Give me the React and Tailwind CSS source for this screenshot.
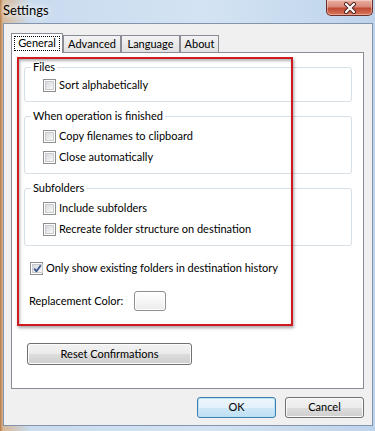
import React from "react";

const Check = ({ checked }) => (
  <span className="flex w-[13px] h-[13px] shrink-0 border border-[#8e8f8f] bg-white p-[1px]">
    <span className="flex flex-1 items-center justify-center border border-[#c9cbcf] bg-linear-to-br from-[#d9dbdf] to-[#f7f7f7]">
      {checked && (
        <svg width="9" height="9" viewBox="0 0 9 9">
          <path
            d="M1.2 4.6 L3.5 7.3 L7.8 1.2"
            fill="none"
            stroke="#3f5a8f"
            strokeWidth="1.9"
            strokeLinejoin="round"
          />
        </svg>
      )}
    </span>
  </span>
);

const Row = ({ label, checked, className = "" }) => (
  <label className={"flex items-center h-[21px] gap-[3px] " + className}>
    <Check checked={checked} />
    <span>{label}</span>
  </label>
);

const Group = ({ title, children, className = "", top = "pt-[3px]" }) => (
  <fieldset
    className={
      "w-[328px] ml-[12px] px-[6px] pb-[5px] border border-[#d5dfe5] rounded-[3px] " +
      top +
      " " +
      className
    }
  >
    <legend className="px-[2px] leading-[14px]">{title}</legend>
    <div className="pl-[12px]">{children}</div>
  </fieldset>
);

const Button = ({ children, className = "", primary }) => (
  <button
    className={
      "flex items-center justify-center rounded-[3px] border text-black " +
      (primary
        ? "border-[#3c7fb1] bg-[linear-gradient(#eef7fc,#e2f1fb_50%,#cfe8f8_50%,#bedff3)] shadow-[inset_0_0_0_1px_#b9e0f5] "
        : "border-[#707070] bg-[linear-gradient(#f2f2f2,#ebebeb_50%,#dddddd_50%,#cfcfcf)] shadow-[inset_0_0_0_1px_#fbfbfb] ") +
      className
    }
  >
    {children}
  </button>
);

const Tab = ({ label, width }) => (
  <div
    className={
      "h-[17px] mb-[1px] flex items-center justify-center border border-b-0 border-[#898c95] bg-linear-to-b from-[#f3f3f3] to-[#e1e1e1] " +
      width
    }
  >
    {label}
  </div>
);

export default function App() {
  return (
    <div className="w-[375px] h-[431px] flex flex-col overflow-hidden font-['Lato',sans-serif] text-[11px] text-black bg-[linear-gradient(90deg,#b87a45_0px,#d8b896_3px,#c9dbef_30px,#d3e3f3_55%,#bed4eb)]">
      <div className="h-[23px] flex justify-between items-start shrink-0">
        <div className="pl-[3px] pt-[2px] text-[13px] leading-[16px] [text-shadow:0_0_6px_#ffffff,0_0_10px_#ffffff]">
          Settings
        </div>
        <div className="mr-[2px] w-[47px] h-[16px] flex items-center justify-center rounded-b-[5px] border border-t-0 border-[#6e3029] bg-[linear-gradient(#eab0a2,#d98878_45%,#c04a34_55%,#d8785c)] shadow-[inset_0_0_0_1px_rgba(255,255,255,0.35)]">
          <svg width="14" height="12" viewBox="0 0 14 12">
            <path d="M3 2 L11 10 M11 2 L3 10" stroke="#4a1f1a" strokeWidth="4" strokeLinecap="round" />
            <path d="M3 2 L11 10 M11 2 L3 10" stroke="#ffffff" strokeWidth="2.2" strokeLinecap="round" />
          </svg>
        </div>
      </div>

      <div className="flex-1 ml-[3px] mr-[2px] mb-[5px] border border-[#8394ac] bg-[#f0f0f0] pl-[7px] pr-[8px] pt-[9px]">
        <div className="flex items-end h-[20px] -mb-px relative z-10">
          <div className="w-[52px] h-[20px] border border-b-0 border-[#898c95] bg-white p-[2px] flex">
            <span className="flex-1 flex items-center justify-center border border-dotted border-black">
              General
            </span>
          </div>
          <Tab label="Advanced" width="w-[58px]" />
          <Tab label="Language" width="w-[59px]" />
          <Tab label="About" width="w-[39px]" />
        </div>

        <div className="relative border border-[#898c95] bg-white pt-[7px] pb-[23px]">
          <Group title="Files" top="pt-[1px]">
            <Row label="Sort alphabetically" />
          </Group>
          <Group title="When operation is finished" className="mt-[7px]">
            <Row label="Copy filenames to clipboard" />
            <Row label="Close automatically" />
          </Group>
          <Group title="Subfolders" className="mt-[7px]">
            <Row label="Include subfolders" />
            <Row label="Recreate folder structure on destination" />
          </Group>

          <Row
            label="Only show existing folders in destination history"
            checked
            className="mt-[12px] ml-[18px]"
          />

          <div className="mt-[12px] ml-[17px] flex items-center h-[20px]">
            <span className="w-[105px]">Replacement Color:</span>
            <span className="w-[32px] h-[20px] rounded-[3px] border border-[#8f8f8f] bg-linear-to-b from-white to-[#ececec] shadow-[inset_0_0_0_1px_#ffffff]" />
          </div>

          <Button className="mt-[32px] ml-[15px] w-[165px] h-[22px]">Reset Confirmations</Button>

          <div className="absolute left-[5px] top-[4px] w-[276px] h-[269px] border-2 border-[#d01a22] shadow-[1px_2px_3px_rgba(0,0,0,0.35),inset_1px_2px_3px_rgba(0,0,0,0.3)] pointer-events-none" />
        </div>

        <div className="flex justify-end gap-[9px] mt-[8px]">
          <Button primary className="w-[79px] h-[21px]">OK</Button>
          <Button className="w-[79px] h-[21px]">Cancel</Button>
        </div>
      </div>
    </div>
  );
}
